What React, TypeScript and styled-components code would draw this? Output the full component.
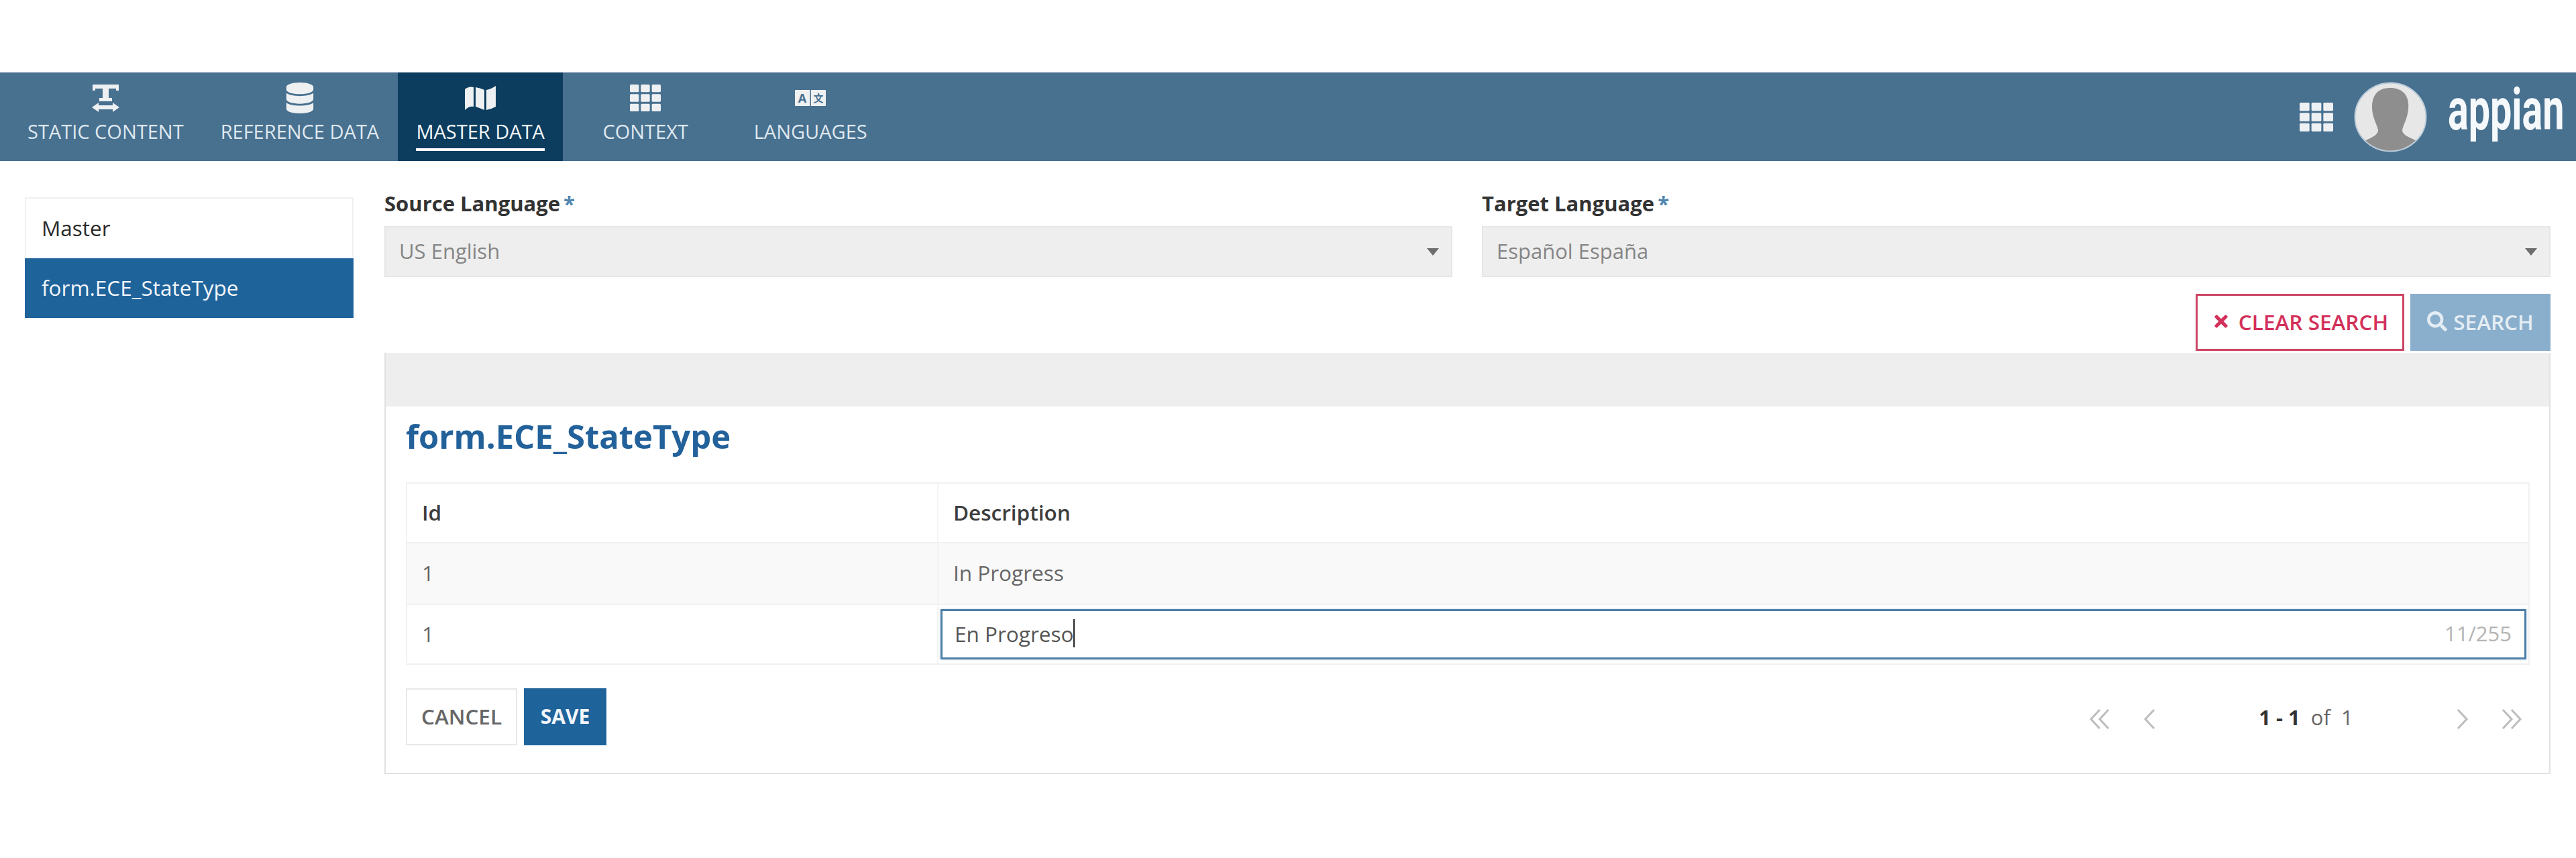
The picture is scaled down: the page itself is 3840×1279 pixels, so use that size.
import React from "react";
import styled, { createGlobalStyle } from "styled-components";
import { FaDatabase, FaTimes, FaSearch } from "react-icons/fa";

const Global = createGlobalStyle`
  html, body { margin: 0; padding: 0; background: #fff; }
  body { font-family: "Open Sans", "Liberation Sans", sans-serif; color: #333; }
`;

const Page = styled.div`
  width: 3840px;
  height: 1279px;
  padding-top: 108px;
  box-sizing: border-box;
  overflow: hidden;
`;

const Header = styled.header`
  height: 132px;
  background: #48708f;
  display: flex;
  align-items: stretch;
  justify-content: space-between;
  padding: 0 15px 0 14px;
`;

const Tabs = styled.nav`
  display: flex;
`;

const Tab = styled.div<{ $active?: boolean; $pad: number }>`
  min-width: 246px;
  box-sizing: border-box;
  padding: 0 ${(p) => p.$pad}px;
  background: ${(p) => (p.$active ? "#0c3d5e" : "transparent")};
  color: ${(p) => (p.$active ? "#f4f8fb" : "#dfe8ef")};
  display: flex;
  flex-direction: column;
  align-items: center;
`;

const TabIcon = styled.div`
  height: 70px;
  display: flex;
  align-items: center;
  justify-content: center;
  padding-top: 6px;
  box-sizing: border-box;
  color: #eef0f2;
`;

const TabLabel = styled.span<{ $active?: boolean }>`
  font-size: 29px;
  line-height: 36px;
  white-space: nowrap;
  padding-bottom: 7px;
  border-bottom: 4px solid ${(p) => (p.$active ? "#fff" : "transparent")};
`;

const HeaderRight = styled.div`
  display: flex;
  align-items: center;
`;

const AppsButton = styled.div`
  display: flex;
  color: #eef1f4;
  margin-right: 31px;
`;

const AvatarSvg = styled.svg`
  width: 109px;
  height: 105px;
  margin-right: 31px;
`;

const LogoBox = styled.div`
  width: 176px;
  height: 90px;
  margin-bottom: 22px;
`;

const LogoText = styled.span`
  display: inline-block;
  font-family: Roboto, sans-serif;
  font-size: 87px;
  font-weight: 700;
  line-height: 90px;
  color: #f6f9fb;
  white-space: nowrap;
  transform-origin: 0 50%;
  transform: scaleX(0.66);
`;

const Main = styled.main`
  display: flex;
  padding: 0 38px 0 37px;
`;

const Sidebar = styled.aside`
  width: 490px;
  margin-top: 54px;
  margin-right: 46px;
  flex: none;
`;

const SideRow = styled.div<{ $selected?: boolean }>`
  height: ${(p) => (p.$selected ? 89 : 91)}px;
  box-sizing: border-box;
  padding-left: ${(p) => (p.$selected ? 25 : 23)}px;
  padding-bottom: 2px;
  display: flex;
  align-items: center;
  font-size: 31.5px;
  background: ${(p) => (p.$selected ? "#1f639b" : "#fff")};
  color: ${(p) => (p.$selected ? "#f2f6fa" : "#2b2b2b")};
  border: ${(p) => (p.$selected ? "none" : "2px solid #f0f0f0")};
  border-bottom: none;
`;

const Content = styled.section`
  flex: 1;
  min-width: 0;
  padding-top: 45px;
`;

const Fields = styled.div`
  display: grid;
  grid-template-columns: 1592px 1593px;
  column-gap: 44px;
`;

const Label = styled.div`
  font-size: 31px;
  font-weight: 700;
  line-height: 36px;
  height: 52px;
  color: #333;
`;

const Required = styled.span`
  color: #4f86b0;
  margin-left: 5px;
`;

const Select = styled.div`
  height: 76px;
  box-sizing: border-box;
  background: #eeeeee;
  border: 2px solid #e6e6e6;
  padding: 0 18px 3px 20px;
  display: flex;
  align-items: center;
  justify-content: space-between;
  font-size: 31px;
  color: #858585;
`;

const Caret = styled.span`
  width: 0;
  height: 0;
  border-left: 9px solid transparent;
  border-right: 9px solid transparent;
  border-top: 11px solid #6d6d6d;
  margin-top: 3px;
`;

const SearchBar = styled.div`
  display: flex;
  justify-content: flex-end;
  gap: 9px;
  margin-top: 25px;
`;

const ClearButton = styled.div`
  width: 311px;
  height: 85px;
  box-sizing: border-box;
  border: 3px solid #cc4565;
  padding-bottom: 3px;
  display: flex;
  align-items: center;
  justify-content: center;
  gap: 12px;
  color: #d3305a;
  font-size: 31.5px;
  font-weight: 600;
  white-space: nowrap;
`;

const SearchButton = styled.div`
  width: 209px;
  height: 85px;
  box-sizing: border-box;
  padding-bottom: 3px;
  background: #8aafcd;
  display: flex;
  align-items: center;
  justify-content: center;
  gap: 9px;
  color: #e4edf4;
  font-size: 31.5px;
  font-weight: 600;
`;

const Panel = styled.div`
  margin-top: 3px;
  height: 628px;
  box-sizing: border-box;
  border: 2px solid #e2e2e2;
  border-top: none;
`;

const PanelBar = styled.div`
  height: 80px;
  background: #eeeeee;
`;

const PanelBody = styled.div`
  padding: 0 29px 0 30px;
`;

const Title = styled.h2`
  margin: 0;
  height: 113px;
  box-sizing: border-box;
  padding-top: 14px;
  font-size: 49px;
  line-height: 60px;
  font-weight: 700;
  color: #22619a;
`;

const Table = styled.div`
  border: 2px solid #f1f1f1;
`;

const Row = styled.div<{ $h: number; $bg?: string; $line?: boolean }>`
  display: grid;
  grid-template-columns: 792px 1fr;
  height: ${(p) => p.$h}px;
  background: ${(p) => p.$bg || "#fff"};
  border-bottom: ${(p) => (p.$line ? "2px solid #f1f1f1" : "none")};
  box-sizing: border-box;
`;

const Cell = styled.div<{ $head?: boolean; $divider?: boolean }>`
  display: flex;
  align-items: center;
  padding: 0 0 3px 22px;
  font-size: 31.5px;
  font-weight: ${(p) => (p.$head ? 600 : 400)};
  color: ${(p) => (p.$head ? "#3d3d3d" : "#666")};
  border-right: ${(p) => (p.$divider ? "2px solid #f4f4f4" : "none")};
`;

const EditCell = styled.div`
  padding: 6px 3px 6px 3px;
  display: flex;
`;

const Input = styled.div`
  flex: 1;
  box-sizing: border-box;
  border: 3px solid #4d7fa6;
  box-shadow: 0 0 3px #b7d0e3;
  padding: 0 19px 3px 18px;
  display: flex;
  align-items: center;
  justify-content: space-between;
  font-size: 31.5px;
  color: #555;
`;

const Typed = styled.span`
  display: flex;
  align-items: center;
`;

const TextCaret = styled.span`
  width: 2px;
  height: 42px;
  background: #222;
`;

const Counter = styled.span`
  color: #b4b4b4;
  font-size: 31px;
`;

const Footer = styled.div`
  display: flex;
  align-items: center;
  justify-content: space-between;
  margin-top: 35px;
  padding-right: 11px;
`;

const Actions = styled.div`
  display: flex;
  gap: 10px;
`;

const CancelButton = styled.div`
  width: 166px;
  height: 85px;
  box-sizing: border-box;
  border: 2px solid #e8e8e8;
  padding-bottom: 3px;
  display: flex;
  align-items: center;
  justify-content: center;
  font-size: 31.5px;
  font-weight: 600;
  color: #666;
`;

const SaveButton = styled.div`
  width: 123px;
  height: 85px;
  box-sizing: border-box;
  padding-bottom: 3px;
  background: #1f639b;
  display: flex;
  align-items: center;
  justify-content: center;
  font-size: 30px;
  font-weight: 700;
  color: #f2f6fa;
`;

const Pager = styled.div`
  display: flex;
  align-items: center;
  margin-top: 7px;
`;

const PagerGap = styled.span<{ $w: number }>`
  width: ${(p) => p.$w}px;
  flex: none;
`;

const PagerIcon = styled.svg`
  height: 30px;
  flex: none;
  fill: none;
  stroke: #bdbdbd;
  stroke-width: 3;
`;

const PagerText = styled.div`
  width: 445px;
  text-align: center;
  font-size: 31px;
  color: #666;
  margin-top: -6px;
  white-space: pre;
`;

const PagerStrong = styled.strong`
  color: #333;
  font-weight: 700;
`;

const Chevrons = ({ dir, double }: { dir: "l" | "r"; double?: boolean }) => {
  const w = double ? 33 : 20;
  const pts = (o: number) =>
    dir === "l" ? `${o + 16},1 ${o + 3},15 ${o + 16},29` : `${o + 4},1 ${o + 17},15 ${o + 4},29`;
  return (
    <PagerIcon width={w} viewBox={`0 0 ${w} 30`}>
      <polyline points={pts(0)} />
      {double && <polyline points={pts(13)} />}
    </PagerIcon>
  );
};

const TextWidthIcon = () => (
  <svg width="41" height="41" viewBox="0 0 41 41" fill="currentColor">
    <path d="M1 0H40V9H36V6H25V20H30V25H11V20H16V6H5V9H1Z" />
    <path d="M0 34L10 27V31H31V27L41 34L31 41V37H10V41Z" />
  </svg>
);

const GridIcon = ({ w, h }: { w: number; h: number }) => {
  const gap = 3;
  const cw = (w - 2 * gap) / 3;
  const ch = (h - 2 * gap) / 3;
  const cells = [0, 1, 2].flatMap((r) => [0, 1, 2].map((c) => [r, c]));
  return (
    <svg width={w} height={h} viewBox={`0 0 ${w} ${h}`} fill="currentColor">
      {cells.map(([r, c]) => (
        <rect key={`${r}-${c}`} x={c * (cw + gap)} y={r * (ch + gap)} width={cw} height={ch} rx="1.5" />
      ))}
    </svg>
  );
};

const MapIcon = () => (
  <svg width="46" height="37" viewBox="0 0 46 37" fill="currentColor">
    <path d="M0 5 Q6 0 13 2 V31 Q6 30 0 36Z" />
    <path d="M16 2 Q22 3 29 6 V36 Q22 33 16 31Z" />
    <path d="M32 6 Q39 5 46 0 V31 Q39 35 32 36Z" />
  </svg>
);

const LanguageIcon = () => (
  <svg width="46" height="24" viewBox="0 0 46 24">
    <rect width="46" height="24" rx="1" fill="#eef0f2" />
    <rect x="22.5" y="0" width="1.5" height="24" fill="#48708f" />
    <text x="11" y="19" fontSize="18" fontWeight="700" textAnchor="middle" fill="#48708f" fontFamily="Open Sans, sans-serif">A</text>
    <text x="35" y="18" fontSize="15" fontWeight="700" textAnchor="middle" fill="#48708f" fontFamily="Noto Sans CJK SC, sans-serif">文</text>
  </svg>
);

const Avatar = () => (
  <AvatarSvg viewBox="0 0 109 105">
    <defs>
      <clipPath id="avatarClip">
        <ellipse cx="54.5" cy="52.5" rx="52" ry="50" />
      </clipPath>
    </defs>
    <ellipse cx="54.5" cy="52.5" rx="53" ry="51" fill="#e7e7e7" stroke="#b9cbd9" strokeWidth="2" />
    <path
      clipPath="url(#avatarClip)"
      fill="#8e8e8e"
      d="M54 9 C72 9 83 20 81 40 C80 55 74 62 72 72 C72 80 86 84 98 90 C88 102 72 106 54 106 C36 106 20 102 12 90 C24 84 36 80 36 72 C34 62 28 55 27 40 C26 20 36 9 54 9Z"
    />
  </AvatarSvg>
);

const tabs = [
  { label: "STATIC CONTENT", icon: <TextWidthIcon />, pad: 27 },
  { label: "REFERENCE DATA", icon: <FaDatabase size={46} />, pad: 28 },
  { label: "MASTER DATA", icon: <MapIcon />, pad: 20, active: true },
  { label: "CONTEXT", icon: <GridIcon w={46} h={40} />, pad: 20 },
  { label: "LANGUAGES", icon: <LanguageIcon />, pad: 20 },
];

export default function App() {
  return (
    <Page>
      <Global />
      <Header>
        <Tabs>
          {tabs.map((t) => (
            <Tab key={t.label} $active={t.active} $pad={t.pad}>
              <TabIcon>{t.icon}</TabIcon>
              <TabLabel $active={t.active}>{t.label}</TabLabel>
            </Tab>
          ))}
        </Tabs>
        <HeaderRight>
          <AppsButton>
            <GridIcon w={50} h={43} />
          </AppsButton>
          <Avatar />
          <LogoBox>
            <LogoText>appian</LogoText>
          </LogoBox>
        </HeaderRight>
      </Header>
      <Main>
        <Sidebar>
          <SideRow>Master</SideRow>
          <SideRow $selected>form.ECE_StateType</SideRow>
        </Sidebar>
        <Content>
          <Fields>
            <div>
              <Label>
                Source Language<Required>*</Required>
              </Label>
              <Select>
                US English
                <Caret />
              </Select>
            </div>
            <div>
              <Label>
                Target Language<Required>*</Required>
              </Label>
              <Select>
                Español España
                <Caret />
              </Select>
            </div>
          </Fields>
          <SearchBar>
            <ClearButton>
              <FaTimes size={28} />
              CLEAR SEARCH
            </ClearButton>
            <SearchButton>
              <FaSearch size={30} />
              SEARCH
            </SearchButton>
          </SearchBar>
          <Panel>
            <PanelBar />
            <PanelBody>
              <Title>form.ECE_StateType</Title>
              <Table>
                <Row $h={89} $line>
                  <Cell $head $divider>Id</Cell>
                  <Cell $head>Description</Cell>
                </Row>
                <Row $h={92} $bg="#f9f9f9" $line>
                  <Cell $divider>1</Cell>
                  <Cell>In Progress</Cell>
                </Row>
                <Row $h={87}>
                  <Cell $divider>1</Cell>
                  <EditCell>
                    <Input>
                      <Typed>
                        En Progreso
                        <TextCaret />
                      </Typed>
                      <Counter>11/255</Counter>
                    </Input>
                  </EditCell>
                </Row>
              </Table>
              <Footer>
                <Actions>
                  <CancelButton>CANCEL</CancelButton>
                  <SaveButton>SAVE</SaveButton>
                </Actions>
                <Pager>
                  <Chevrons dir="l" double />
                  <PagerGap $w={48} />
                  <Chevrons dir="l" />
                  <PagerText>
                    <PagerStrong>1 - 1</PagerStrong>  of  1
                  </PagerText>
                  <Chevrons dir="r" />
                  <PagerGap $w={47} />
                  <Chevrons dir="r" double />
                </Pager>
              </Footer>
            </PanelBody>
          </Panel>
        </Content>
      </Main>
    </Page>
  );
}
